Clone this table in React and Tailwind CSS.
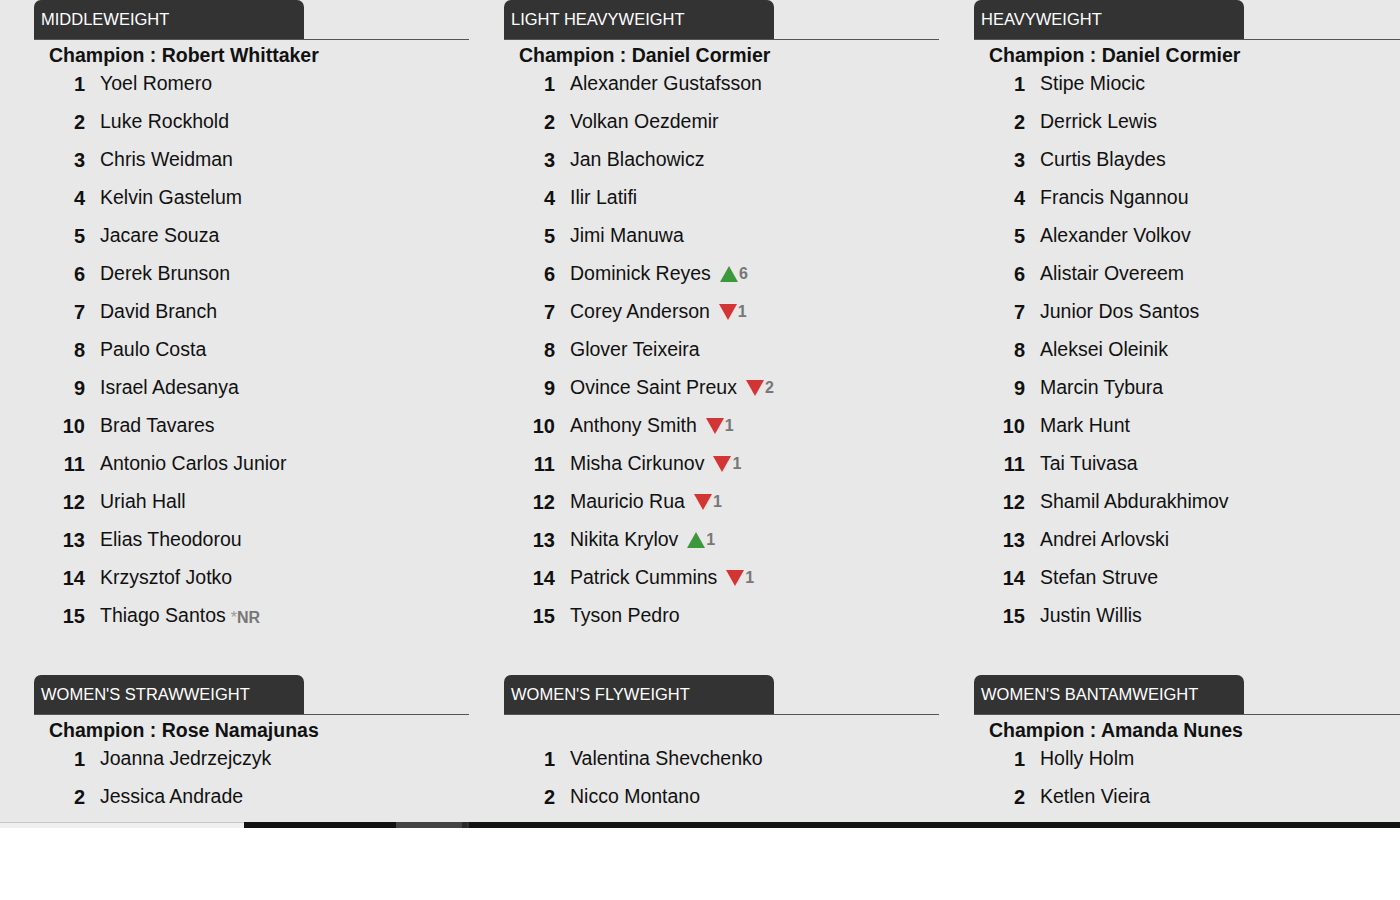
import React from "react";

const sections = [
  {
    title: "MIDDLEWEIGHT",
    champion: "Robert Whittaker",
    rows: [
      ["Yoel Romero"], ["Luke Rockhold"], ["Chris Weidman"], ["Kelvin Gastelum"], ["Jacare Souza"],
      ["Derek Brunson"], ["David Branch"], ["Paulo Costa"], ["Israel Adesanya"], ["Brad Tavares"],
      ["Antonio Carlos Junior"], ["Uriah Hall"], ["Elias Theodorou"], ["Krzysztof Jotko"], ["Thiago Santos", "nr"],
    ],
  },
  {
    title: "LIGHT HEAVYWEIGHT",
    champion: "Daniel Cormier",
    rows: [
      ["Alexander Gustafsson"], ["Volkan Oezdemir"], ["Jan Blachowicz"], ["Ilir Latifi"], ["Jimi Manuwa"],
      ["Dominick Reyes", "up", 6], ["Corey Anderson", "down", 1], ["Glover Teixeira"], ["Ovince Saint Preux", "down", 2],
      ["Anthony Smith", "down", 1], ["Misha Cirkunov", "down", 1], ["Mauricio Rua", "down", 1], ["Nikita Krylov", "up", 1],
      ["Patrick Cummins", "down", 1], ["Tyson Pedro"],
    ],
  },
  {
    title: "HEAVYWEIGHT",
    champion: "Daniel Cormier",
    rows: [
      ["Stipe Miocic"], ["Derrick Lewis"], ["Curtis Blaydes"], ["Francis Ngannou"], ["Alexander Volkov"],
      ["Alistair Overeem"], ["Junior Dos Santos"], ["Aleksei Oleinik"], ["Marcin Tybura"], ["Mark Hunt"],
      ["Tai Tuivasa"], ["Shamil Abdurakhimov"], ["Andrei Arlovski"], ["Stefan Struve"], ["Justin Willis"],
    ],
  },
  {
    title: "WOMEN'S STRAWWEIGHT",
    champion: "Rose Namajunas",
    rows: [["Joanna Jedrzejczyk"], ["Jessica Andrade"]],
  },
  {
    title: "WOMEN'S FLYWEIGHT",
    champion: null,
    rows: [["Valentina Shevchenko"], ["Nicco Montano"]],
  },
  {
    title: "WOMEN'S BANTAMWEIGHT",
    champion: "Amanda Nunes",
    rows: [["Holly Holm"], ["Ketlen Vieira"]],
  },
];

function Up() {
  return (
    <svg width="18" height="16" viewBox="0 0 18 16" className="inline-block">
      <polygon points="9,0 18,16 0,16" fill="#3a9a3a" />
    </svg>
  );
}

function Down() {
  return (
    <svg width="18" height="16" viewBox="0 0 18 16" className="inline-block">
      <polygon points="0,0 18,0 9,16" fill="#d13636" />
    </svg>
  );
}

function Row({ rank, data }) {
  const [name, kind, n] = data;
  return (
    <div className="flex items-center h-[28px] mb-[10px]">
      <div className="w-[51px] text-right font-bold text-[20px] text-[#111]">{rank}</div>
      <div className="ml-[15px] text-[19.5px] text-[#111] whitespace-nowrap flex items-center">
        <span>{name}</span>
        {kind === "up" && (
          <span className="ml-[9px] flex items-center">
            <Up />
            <span className="ml-[1px] text-[16px] font-bold text-[#777]">{n}</span>
          </span>
        )}
        {kind === "down" && (
          <span className="ml-[9px] flex items-center">
            <Down />
            <span className="ml-[1px] text-[16px] font-bold text-[#777]">{n}</span>
          </span>
        )}
        {kind === "nr" && (
          <span className="ml-[5px] text-[16px] text-[#777] mt-[3px]">
            <span className="font-normal text-[#999]">*</span>
            <span className="font-bold">NR</span>
          </span>
        )}
      </div>
    </div>
  );
}

function Section({ s }) {
  return (
    <div className="w-[435px] shrink-0">
      <div className="border-b border-[#555]">
        <div className="w-[270px] h-[39px] bg-[#333333] rounded-t-[7px] flex items-center pl-[7px] text-white text-[16.5px]">
          {s.title}
        </div>
      </div>
      <div className="h-[30px] pl-[15px] pt-[1px] flex items-center font-bold text-[19.5px] text-[#111]">
        {s.champion ? `Champion : ${s.champion}` : ""}
      </div>
      {s.rows.map((r, i) => (
        <Row key={i} rank={i + 1} data={r} />
      ))}
    </div>
  );
}

export default function App() {
  return (
    <div
      className="w-[1400px] h-[900px] overflow-hidden bg-white"
      style={{ fontFamily: '"Liberation Sans", Arial, sans-serif' }}
    >
      <div className="h-[822px] overflow-hidden bg-[#e8e8e8]">
        <div className="flex flex-wrap w-[1450px] gap-x-[35px] gap-y-[35px] pl-[34px]">
          {sections.map((s, i) => (
            <Section key={i} s={s} />
          ))}
        </div>
      </div>
      <div className="flex h-[6px]">
        <div className="w-[244px] bg-[#efefef] border-t border-[#c8c8c8]" />
        <div className="w-[152px] bg-[#111111]" />
        <div className="w-[66px] bg-[#444444]" />
        <div className="w-[5px] bg-[#2a2a2a]" />
        <div className="w-[2px] bg-[#333333]" />
        <div className="flex-1 bg-[#121412]" />
      </div>
    </div>
  );
}
